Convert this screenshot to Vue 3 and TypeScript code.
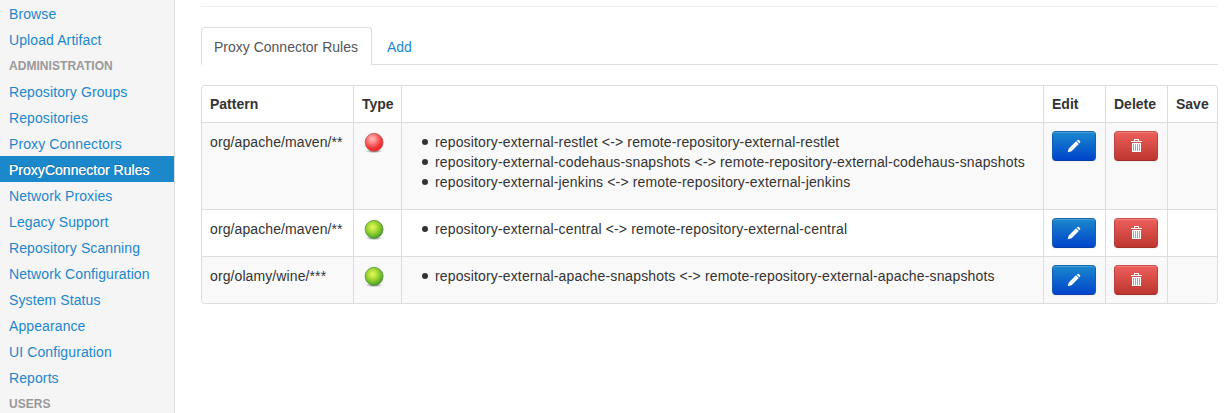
<script setup lang="ts">
interface NavItem { label: string; header?: boolean; active?: boolean }
interface Rule { id: number; pattern: string; type: 'black' | 'white'; links: string[] }

const nav: NavItem[] = [
  { label: 'Browse' },
  { label: 'Upload Artifact' },
  { label: 'ADMINISTRATION', header: true },
  { label: 'Repository Groups' },
  { label: 'Repositories' },
  { label: 'Proxy Connectors' },
  { label: 'ProxyConnector Rules', active: true },
  { label: 'Network Proxies' },
  { label: 'Legacy Support' },
  { label: 'Repository Scanning' },
  { label: 'Network Configuration' },
  { label: 'System Status' },
  { label: 'Appearance' },
  { label: 'UI Configuration' },
  { label: 'Reports' },
  { label: 'USERS', header: true },
]

const rules: Rule[] = [
  {
    id: 1,
    pattern: 'org/apache/maven/**',
    type: 'black',
    links: [
      'repository-external-restlet <-> remote-repository-external-restlet',
      'repository-external-codehaus-snapshots <-> remote-repository-external-codehaus-snapshots',
      'repository-external-jenkins <-> remote-repository-external-jenkins',
    ],
  },
  {
    id: 2,
    pattern: 'org/apache/maven/**',
    type: 'white',
    links: ['repository-external-central <-> remote-repository-external-central'],
  },
  {
    id: 3,
    pattern: 'org/olamy/wine/***',
    type: 'white',
    links: ['repository-external-apache-snapshots <-> remote-repository-external-apache-snapshots'],
  },
]
</script>

<template>
  <div class="page">
    <svg class="defs" width="0" height="0" aria-hidden="true">
      <defs>
        <radialGradient id="orb-black" cx="0.4" cy="0.32" r="0.7">
          <stop offset="0" stop-color="#ffbcbc" />
          <stop offset="0.35" stop-color="#fb8080" />
          <stop offset="0.7" stop-color="#f43a3a" />
          <stop offset="1" stop-color="#ea2020" />
        </radialGradient>
        <radialGradient id="orb-white" cx="0.42" cy="0.38" r="0.66">
          <stop offset="0" stop-color="#e6f85c" />
          <stop offset="0.4" stop-color="#a9dc36" />
          <stop offset="0.8" stop-color="#62b428" />
          <stop offset="1" stop-color="#3a8c1e" />
        </radialGradient>
        <radialGradient id="orb-shadow">
          <stop offset="0" stop-color="#000" stop-opacity="0.6" />
          <stop offset="1" stop-color="#000" stop-opacity="0" />
        </radialGradient>
      </defs>
    </svg>
    <nav class="sidebar">
      <ul>
        <li v-for="item in nav" :key="item.label" :class="{ header: item.header, active: item.active }">
          <span v-if="item.header">{{ item.label }}</span>
          <a v-else>{{ item.label }}</a>
        </li>
      </ul>
    </nav>
    <main class="content">
      <hr />
      <ul class="tabs">
        <li class="current"><a>Proxy Connector Rules</a></li>
        <li><a>Add</a></li>
      </ul>
      <table>
        <colgroup>
          <col class="c-pattern" /><col class="c-type" /><col class="c-links" />
          <col class="c-action" /><col class="c-action" /><col class="c-save" />
        </colgroup>
        <thead>
          <tr><th>Pattern</th><th>Type</th><th></th><th>Edit</th><th>Delete</th><th>Save</th></tr>
        </thead>
        <tbody>
          <tr v-for="rule in rules" :key="rule.id">
            <td class="pattern">{{ rule.pattern }}</td>
            <td>
              <svg class="orb" width="24" height="24" viewBox="0 0 24 24">
                <ellipse cx="12" cy="20" rx="8.5" ry="2.1" fill="url(#orb-shadow)" />
                <circle cx="12.1" cy="11.3" r="9" :fill="`url(#orb-${rule.type})`" :stroke="rule.type === 'black' ? '#b45a5a' : '#5c9448'" stroke-width="0.8" />
              </svg>
            </td>
            <td>
              <ul class="links">
                <li v-for="link in rule.links" :key="link">{{ link }}</li>
              </ul>
            </td>
            <td>
              <button class="btn primary" aria-label="Edit">
                <svg width="14" height="14" viewBox="0 0 14 14" fill="#fff">
                  <path d="M.7 13.3l1.1-3.8L9 2.3 11.8 5l-7.2 7.2zM9.7 1.7l.9-.8q.6-.5 1.2 0l1.3 1.3q.5.6 0 1.2l-.8.9z" />
                </svg>
              </button>
            </td>
            <td>
              <button class="btn danger" aria-label="Delete">
                <svg width="14" height="14" viewBox="0 0 14 14" fill="#fff">
                  <path fill-rule="evenodd" d="M2 2h3V0h5v2h3v1H2zM6 1v1h3V1zM3 4h9v9H3zM4 5v7h1V5zM6 5v7h1V5zM8 5v7h1V5zM10 5v7h1V5z" />
                  <path opacity="0.4" d="M4 5h7v7H4z" />
                </svg>
              </button>
            </td>
            <td></td>
          </tr>
        </tbody>
      </table>
    </main>
  </div>
</template>

<style>
body { margin: 0; background: #fff; overflow: hidden; }
</style>

<style scoped>
.page {
  display: flex;
  height: 413px;
  overflow: hidden;
  font: 14px/20px "Liberation Sans", Arial, sans-serif;
  color: #333;
}
.defs { position: absolute; }
ul { margin: 0; padding: 0; list-style: none; }
.sidebar {
  box-sizing: border-box;
  width: 175px;
  flex: none;
  background: #f5f5f5;
  border-right: 1px solid #ddd;
}
.sidebar li {
  height: 26px;
  padding-left: 9px;
  line-height: 28px;
  letter-spacing: 0.1px;
  color: #1c87cd;
  white-space: nowrap;
}
.sidebar .header {
  font-size: 12px;
  font-weight: bold;
  line-height: 28px;
  letter-spacing: 0.05px;
  color: #999;
}
.sidebar .active {
  background: #1b88cc;
  color: #fff;
  letter-spacing: 0.02px;
  text-shadow: 0 -1px 0 rgba(0, 0, 0, 0.2), 0 0 0.5px #fff;
}
.content { width: 1017px; margin-left: 26px; }
hr { margin: 6px 0 20px; border: 0; border-top: 1px solid #eee; }
.tabs { display: flex; height: 37px; border-bottom: 1px solid #ddd; margin-bottom: 20px; }
.tabs li {
  box-sizing: border-box;
  height: 38px;
  padding: 9px 13px 8px 14px;
  border: 1px solid transparent;
  color: #1c87cd;
  line-height: 20px;
}
.tabs .current {
  width: 171px;
  padding: 9px 12px 8px;
  background: #fff;
  border-color: #ddd #ddd #fff;
  border-radius: 4px 4px 0 0;
  color: #555;
  white-space: nowrap;
}
table {
  table-layout: fixed;
  width: 1017px;
  border: 1px solid #ddd;
  border-left: 0;
  border-radius: 4px;
  border-collapse: separate;
  border-spacing: 0;
}
.c-pattern { width: 152px; }
.c-type { width: 48px; }
.c-links { width: 642px; }
.c-action { width: 62px; }
.c-save { width: 50px; }
th, td {
  padding: 8px;
  border-left: 1px solid #ddd;
  text-align: left;
  vertical-align: top;
  white-space: nowrap;
}
th:first-child { border-top-left-radius: 4px; }
tr:last-child td:first-child { border-bottom-left-radius: 4px; }
tr:last-child td:last-child { border-bottom-right-radius: 4px; }
th { height: 20px; }
td { border-top: 1px solid #ddd; }
tbody tr:nth-child(odd) td { background: #f9f9f9; }
.pattern { padding-top: 9px; letter-spacing: 0.1px; }
.orb { display: block; margin-bottom: -4px; }
.links { margin: 0 0 9px 12px; padding-top: 1px; letter-spacing: 0.15px; }
.links li { display: flex; align-items: center; height: 20px; }
.links li::before {
  content: "";
  width: 6px;
  height: 6px;
  margin-right: 7px;
  border-radius: 50%;
  background: #333;
}
.btn {
  display: flex;
  align-items: center;
  justify-content: center;
  box-sizing: border-box;
  width: 44px;
  height: 30px;
  padding: 0;
  border: 1px solid;
  border-radius: 4px;
  box-shadow: inset 0 1px 0 rgba(255, 255, 255, 0.2), 0 1px 2px rgba(0, 0, 0, 0.05);
}
.primary { background: linear-gradient(#1b88cc, #0044cc); border-color: #1766ae #1260b2 #053da9; }
.danger { background: linear-gradient(#ee5f5b, #bd362f); border-color: #c94d48 #b8423d #a22e28; }
</style>
